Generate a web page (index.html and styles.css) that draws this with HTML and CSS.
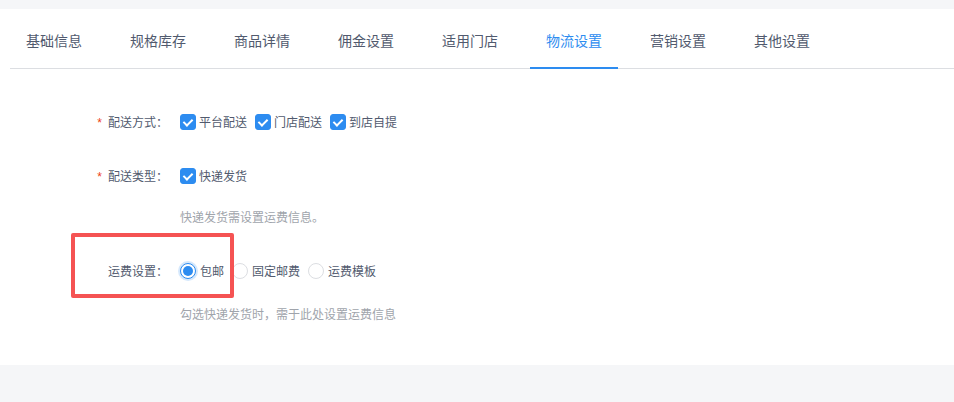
FILE: index.html
```html
<!DOCTYPE html>
<html lang="zh-CN">
<head>
    <meta charset="UTF-8">
    <meta name="viewport" content="width=device-width, initial-scale=1.0">
    <title>物流设置</title>
    <link rel="stylesheet" href="styles.css">
</head>
<body>
    <div class="card">
        <div class="tabs">
            <div class="tab">基础信息</div>
            <div class="tab">规格库存</div>
            <div class="tab">商品详情</div>
            <div class="tab">佣金设置</div>
            <div class="tab">适用门店</div>
            <div class="tab active">物流设置</div>
            <div class="tab">营销设置</div>
            <div class="tab">其他设置</div>
        </div>

        <div class="form">
            <div class="form-item">
                <label class="form-label"><span class="required">*</span>配送方式：</label>
                <div class="form-control">
                    <span class="check-wrap"><span class="checkbox checked"></span>平台配送</span>
                    <span class="check-wrap"><span class="checkbox checked"></span>门店配送</span>
                    <span class="check-wrap"><span class="checkbox checked"></span>到店自提</span>
                </div>
            </div>

            <div class="form-item item-type">
                <label class="form-label"><span class="required">*</span>配送类型：</label>
                <div class="form-control">
                    <span class="check-wrap"><span class="checkbox checked"></span>快递发货</span>
                </div>
            </div>
            <div class="help help-type">快递发货需设置运费信息。</div>

            <div class="form-item item-freight">
                <label class="form-label">运费设置：</label>
                <div class="form-control">
                    <span class="radio-wrap"><span class="radio checked"></span>包邮</span>
                    <span class="radio-wrap"><span class="radio"></span>固定邮费</span>
                    <span class="radio-wrap"><span class="radio"></span>运费模板</span>
                </div>
                <div class="mark-box"></div>
            </div>
            <div class="help help-freight">勾选快递发货时，需于此处设置运费信息</div>
        </div>
    </div>
</body>
</html>
```

FILE: styles.css
```css
body {
    margin: 0;
    background-color: #f5f6f8;
    font-family: "Noto Sans CJK SC", "Liberation Sans", sans-serif;
    color: #515a6e;
}
.card {
    margin-top: 9px;
    height: 356px;
    padding-left: 10px;
    background-color: #fff;
    box-sizing: border-box;
}
.tabs {
    display: flex;
    border-bottom: 1px solid #dcdee2;
}
.tab {
    height: 60px;
    padding: 21px 16px 0;
    margin-right: 16px;
    margin-bottom: -1px;
    box-sizing: border-box;
    font-size: 14px;
    line-height: 20px;
    border-bottom: 2px solid transparent;
    cursor: pointer;
}
.tab.active {
    color: #2d8cf0;
    border-bottom-color: #2d8cf0;
}
.form {
    padding-top: 37px;
    font-size: 12px;
}
.form-item {
    position: relative;
    display: flex;
    align-items: center;
    height: 32px;
}
.form-label {
    width: 158px;
    padding-right: 12px;
    text-align: right;
    line-height: 32px;
}
.required {
    color: #ed4014;
    margin-right: 6px;
    font-family: "Liberation Sans", sans-serif;
}
.form-control {
    display: flex;
    align-items: center;
}
.check-wrap,
.radio-wrap {
    display: flex;
    align-items: center;
    margin-right: 8px;
    line-height: 18px;
}
.checkbox {
    position: relative;
    width: 16px;
    height: 16px;
    margin-right: 3px;
    border-radius: 3px;
    border: 1px solid #dcdee2;
    box-sizing: border-box;
}
.checkbox.checked {
    background-color: #2d8cf0;
    border-color: #2d8cf0;
}
.checkbox.checked::after {
    content: "";
    position: absolute;
    left: 4px;
    top: 2px;
    width: 4px;
    height: 7px;
    border: 2px solid #fff;
    border-top: 0;
    border-left: 0;
    transform: rotate(45deg);
}
.item-type {
    margin-top: 22px;
}
.help {
    padding-left: 170px;
    line-height: 18px;
    color: #a0a4ab;
}
.help-type {
    margin-top: 16px;
}
.item-freight {
    margin-top: 29px;
}
.help-freight {
    margin-top: 18px;
}
.radio {
    position: relative;
    width: 16px;
    height: 16px;
    margin-right: 4px;
    border-radius: 50%;
    border: 1px solid #dcdee2;
    box-sizing: border-box;
    background-color: #fff;
}
.radio.checked {
    border-color: #2d8cf0;
    box-shadow: 0 0 0 2px rgba(45, 140, 240, 0.2);
}
.radio.checked::after {
    content: "";
    position: absolute;
    left: 2px;
    top: 2px;
    width: 10px;
    height: 10px;
    border-radius: 50%;
    background-color: #2d8cf0;
}
.mark-box {
    position: absolute;
    left: 61px;
    top: -22px;
    width: 163px;
    height: 65px;
    border: 4px solid #f55353;
    border-radius: 2px;
    box-sizing: border-box;
}
```
